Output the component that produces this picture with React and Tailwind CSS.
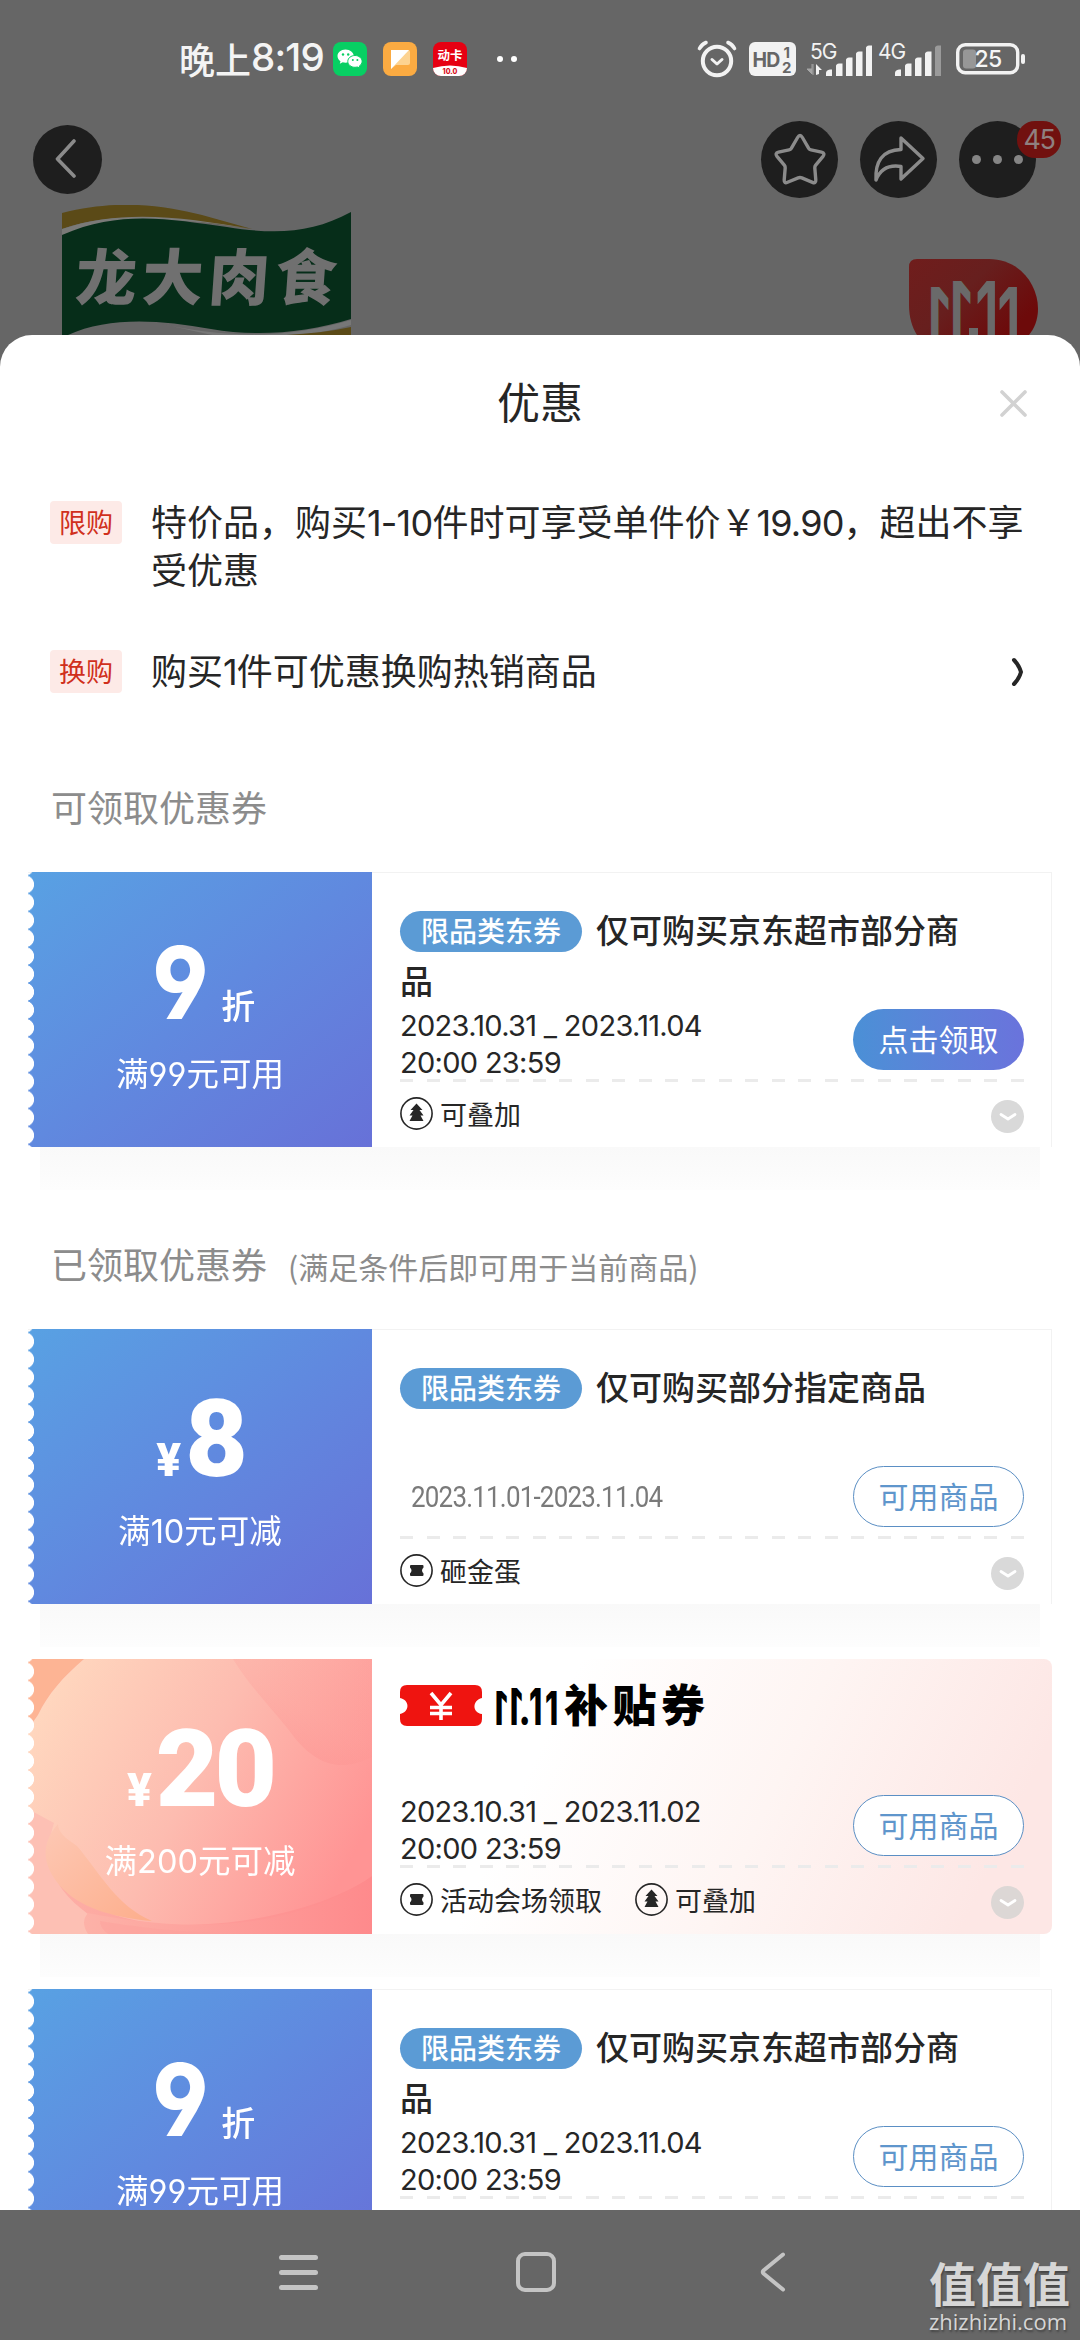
import clsx from 'clsx';

const BackIcon = () => (
  <svg width="22" height="40" viewBox="0 0 22 40" fill="none" stroke="#8b8b8b" strokeWidth="3.6" strokeLinecap="round" strokeLinejoin="round">
    <path d="M19 2 2.5 20 19 37" />
  </svg>
);

const AppIcons = () => (
  <div className="flex items-center gap-4">
    <svg width="34" height="34" viewBox="0 0 34 34">
      <rect width="34" height="34" rx="8" fill="#07cf63" />
      <path d="M12.5 7.5c-4.6 0-8 3-8 6.6 0 2.1 1.2 4 3 5.2l-.7 2.5 2.9-1.5c.9.2 1.8.4 2.8.4 4.6 0 8.2-3 8.2-6.6s-3.6-6.6-8.2-6.6z" fill="#fff" />
      <path d="M22 13.5c-4 0-7.2 2.6-7.2 5.9s3.2 5.9 7.2 5.9c.9 0 1.7-.1 2.5-.3l2.4 1.3-.6-2.2c1.7-1.1 2.8-2.8 2.8-4.7 0-3.3-3.2-5.9-7.1-5.9z" fill="#fff" stroke="#07cf63" strokeWidth="1" />
      <g fill="#07cf63">
        <circle cx="10" cy="12.5" r="1.2" />
        <circle cx="15.2" cy="12.5" r="1.2" />
        <circle cx="19.8" cy="18" r="1" />
        <circle cx="24.4" cy="18" r="1" />
      </g>
    </svg>
    <svg width="34" height="34" viewBox="0 0 34 34">
      <rect width="34" height="34" rx="8" fill="#fbab42" />
      <path d="M8 8h17a2 2 0 0 1 2 2v11a2 2 0 0 1-2 2H13l-5 4z" fill="#fdd391" />
      <path d="M8 8h18L8 27z" fill="#fff" />
    </svg>
    <svg width="34" height="34" viewBox="0 0 34 34">
      <defs>
        <clipPath id="card-app">
          <rect width="34" height="34" rx="8" />
        </clipPath>
      </defs>
      <g clipPath="url(#card-app)">
        <rect width="34" height="34" fill="#e60012" />
        <path d="M0 26q17-5 34 0v8H0z" fill="#fff" />
      </g>
      <text x="17" y="18" textAnchor="middle" fontSize="12.5" fontWeight="700" fill="#fff" fontFamily="'Noto Sans CJK SC', sans-serif">动卡</text>
      <text x="17" y="31.5" textAnchor="middle" fontSize="7" fontWeight="800" fill="#d8101c" fontFamily="Inter, sans-serif">10.0</text>
    </svg>
  </div>
);

const Signal = ({ label, weak, data }) => (
  <svg width="66" height="36" viewBox="0 0 66 36">
    <text x={data ? 4 : 3} y="17.5" fontSize="21" letterSpacing="-1" fill="#f2f2f2" fontFamily="Inter, sans-serif">{label}</text>
    {data && (
      <g>
        <path d="M6 23v10l-5-5h5M7 23v11" fill="#a5a5a5" stroke="#a5a5a5" strokeWidth="1" />
        <path d="M10 34V23l6 6h-3v4" fill="#f2f2f2" />
      </g>
    )}
    <g fill="#f2f2f2">
      <path d="M20 35v-3q0-3 4-3.5h2v6.5z" />
      <path d="M30 35V25q0-2 3-2.5h3.5V35z" />
      <path d="M40 35V19q0-2 3-2.5h3.5V35z" />
      <path d="M50 35V13q0-2 3-2.5h3.5V35z" />
      <path d="M60 35V7q0-2 3-2.5h3.5V35z" fill={weak ? '#9a9a9a' : '#f2f2f2'} />
    </g>
  </svg>
);

const StatusBar = () => (
  <div className="flex h-[118px] items-center pl-[179px]">
    <span className="flex w-[154px] items-center whitespace-nowrap pb-[3px] text-[36px] font-medium leading-none text-[#f4f4f4]">
      晚上<span className="font-['Inter'] text-[38.5px] leading-none tracking-[-0.8px]">8:19</span>
    </span>
    <AppIcons />
    <div className="ml-[30px] flex w-[200px] gap-2">
      <i className="size-[6px] rounded-full bg-white" />
      <i className="size-[6px] rounded-full bg-white" />
    </div>
    <svg className="shrink-0" width="40" height="38" viewBox="0 0 40 38" fill="none" stroke="#f2f2f2" strokeLinecap="round" strokeLinejoin="round">
      <circle cx="20" cy="21" r="14.2" strokeWidth="4" />
      <path d="M15 19.5l5 4.5 5-4.5" strokeWidth="3" />
      <path d="M2.5 8.5q2-4 6.5-6M37.5 8.5q-2-4-6.5-6" strokeWidth="3.6" />
    </svg>
    <svg className="ml-[12px] shrink-0" width="47" height="34" viewBox="0 0 47 34" fill="#666" fontFamily="Inter, sans-serif">
      <rect width="47" height="34" rx="6" fill="#f2f2f2" />
      <text x="3.5" y="24.5" fontSize="19.5" fontWeight="700" letterSpacing="-0.8">HD</text>
      <text x="34.5" y="15.5" fontSize="15" fontWeight="700">1</text>
      <text x="33" y="31" fontSize="15" fontWeight="700">2</text>
    </svg>
    <div className="ml-[10px] flex shrink-0 gap-[3px]">
      <Signal label="5G" data />
      <Signal label="4G" weak />
    </div>
    <svg className="ml-[15px] shrink-0" width="70" height="32" viewBox="0 0 70 32">
      <rect x="1.7" y="1.7" width="60" height="28" rx="7.5" fill="none" stroke="#f2f2f2" strokeWidth="3.4" />
      <rect x="7" y="6.5" width="13" height="19" rx="3" fill="#979797" />
      <rect x="65" y="11" width="4" height="10" rx="2" fill="#f2f2f2" />
      <text x="32" y="24" textAnchor="middle" fontSize="23" fontWeight="500" letterSpacing="-0.8" fill="#f6f6f6" fontFamily="Inter, sans-serif">25</text>
    </svg>
  </div>
);

const Toolbar = () => (
  <div className="flex h-[82px] items-center pl-[33px] pr-[44px]">
    <button className="flex size-[69px] items-center justify-center rounded-full bg-[#1e1e1e] pr-1">
      <BackIcon />
    </button>
    <div className="ml-auto flex gap-[22px]">
      <button className="flex size-[77px] items-center justify-center rounded-full bg-[#1e1e1e]">
        <svg width="54" height="54" viewBox="0 0 54 54" fill="none" stroke="#8b8b8b" strokeWidth="3.4" strokeLinejoin="round">
          <path d="M24.6 5.5q2.4-4 4.8 0l6.3 10.8q.8 1.3 2.3 1.6l10.5 2.3q4 1 1.5 4.2l-7.3 8.7q-1 1.2-.9 2.8l1 12q.2 3.8-3.3 2.4l-10.700-4.400q-1.800-.7-3.600 0l-10.700 4.400q-3.500 1.400-3.300-2.400l1-12q.1-1.600-.9-2.800L4 24.400q-2.500-3.200 1.500-4.200L16 17.900q1.500-.3 2.300-1.600z" />
        </svg>
      </button>
      <button className="flex size-[77px] items-center justify-center rounded-full bg-[#1e1e1e]">
        <svg width="54" height="48" viewBox="0 0 54 48" fill="none" stroke="#8b8b8b" strokeWidth="3.4" strokeLinejoin="round">
          <path d="M29 3 51 23.500 29 44V31.500C16 29.500 8 35 4 45 3 27 10 15 29 14.500z" />
        </svg>
      </button>
      <button className="relative flex size-[77px] items-center justify-center gap-[12px] rounded-full bg-[#1e1e1e]">
        <i className="size-[9px] rounded-full bg-[#858585]" />
        <i className="size-[9px] rounded-full bg-[#858585]" />
        <i className="size-[9px] rounded-full bg-[#858585]" />
        <span className="absolute -right-[25px] top-0 flex h-[37px] w-[44px] items-center justify-center rounded-[18px] bg-[#71110f] font-['Inter'] text-[27px] leading-none tracking-[-1.5px] text-[#8f8080]">45</span>
      </button>
    </div>
  </div>
);

// Store logo and sale badge behind the sheet
const StoreBanner = () => (
  <div className="flex h-[135px] items-end justify-between pl-[62px] pr-[42px]">
    <svg width="289" height="130" viewBox="0 0 289 130">
      <path d="M0 8C55-6 100 0 140 10l50 14C130 16 60 3 0 24z" fill="#5b4a17" />
      <path d="M0 24C60 4 120 12 190 24 130 15 70 7 0 30z" fill="#7a7a78" />
      <path d="M0 30C60 4 110 15 165 22c50 8 85 6 124-15v107c-45 14-95 18-140 10C95 114 45 112 6 130H0z" fill="#062d19" />
      <path d="M100 119c55 12 120 17 189-4v5c-45 13-80 12-110 10H150z" fill="#777" />
      <path d="M165 130c45 2 85 0 124-8v8z" fill="#5b4a17" />
      <text x="14" y="95" fontSize="61" fontWeight="900" letterSpacing="5.5" fill="#707070" fontFamily="'Noto Sans CJK SC', sans-serif" transform="skewX(-4) translate(5 0)">龙大肉食</text>
    </svg>
    <svg width="129" height="76" viewBox="0 0 129 76">
      <defs>
        <linearGradient id="sale" x1="0" y1="0" x2="1" y2="0.6">
          <stop offset="0" stopColor="#701d1c" />
          <stop offset="0.5" stopColor="#671f1e" />
          <stop offset="1" stopColor="#6d0a0a" />
        </linearGradient>
      </defs>
      <path d="M0 8Q0 0 8 0h72c30 0 49 25 49 50 0 11-4 20-9 26H8C3 68 0 58 0 46z" fill="url(#sale)" />
      <g fontFamily="Inter, sans-serif" fontSize="98" fontWeight="600" fill="#6a6a6a">
        <text transform="translate(42 99) scale(-0.58 1)">1</text>
        <text transform="translate(64 93) scale(-0.58 1)">1</text>
        <text transform="translate(66 93) scale(0.58 1)">1</text>
        <text transform="translate(88 99) scale(0.58 1)">1</text>
      </g>
      <rect x="60" y="69" width="9" height="8" fill="#6a6a6a" />
    </svg>
  </div>
);

const promos = [
  {
    tag: '限购',
    text: (
      <>
        特价品，购买<span className="font-['Inter'] leading-none tracking-[-0.8px]">1-10</span>件时可享受单件价￥<span className="font-['Inter'] leading-none tracking-[-0.8px]">19.90</span>，超出不享受优惠
      </>
    ),
  },
  {
    tag: '换购',
    text: (
      <>
        购买<span className="font-['Inter'] leading-none tracking-[-1px]">1</span>件可优惠换购热销商品
      </>
    ),
    more: true,
  },
];

const PromoRow = ({ tag, text, more }) => (
  <div className="flex h-[96px] items-start">
    <span className="mt-[5px] flex h-[43px] w-[72px] shrink-0 items-center justify-center rounded bg-[#fdeae7] pb-[2px] text-[27px] leading-none text-[#d0301c]">{tag}</span>
    <p className="ml-[29px] w-[878px] text-[36px] leading-[48px] text-[#262626]">{text}</p>
    {more && (
      <svg className="ml-[-18px] mt-[12px] shrink-0" width="14" height="30" viewBox="0 0 14 30" fill="none" stroke="#262626" strokeWidth="4" strokeLinecap="round">
        <path d="M3 3q5 5 7 12-2 7-7 12" />
      </svg>
    )}
  </div>
);

const StackIcon = () => (
  <svg width="33" height="33" viewBox="0 0 33 33">
    <circle cx="16.5" cy="16.5" r="15.6" fill="none" stroke="#262626" strokeWidth="1.6" />
    <path d="M16.500 6.500l6 6.500h-3l4 5.500h-3l3 5.500h-14l3-5.500h-3l4-5.500h-3z" fill="#262626" />
  </svg>
);

const VoucherIcon = () => (
  <svg width="33" height="33" viewBox="0 0 33 33">
    <circle cx="16.5" cy="16.5" r="15.6" fill="none" stroke="#262626" strokeWidth="1.6" />
    <path d="M11 11h11.500q1 0 1 1v1.500q-3 3 0 6V21q0 1-1 1H11q-1 0-1-1v-1.500q3-3 0-6V12q0-1 1-1z" fill="#262626" />
  </svg>
);

const labels = {
  stack: { Icon: StackIcon, text: '可叠加' },
  egg: { Icon: VoucherIcon, text: '砸金蛋' },
  venue: { Icon: VoucherIcon, text: '活动会场领取' },
};

const PetalArt = () => (
  <svg className="absolute inset-0" width="344" height="275" viewBox="0 0 344 275" preserveAspectRatio="none">
    <defs>
      <linearGradient id="petal-mid" x1="0" y1="0.2" x2="1" y2="0.6">
        <stop offset="0" stopColor="#ffd8bf" />
        <stop offset="0.5" stopColor="#fdbcb0" />
        <stop offset="1" stopColor="#ff9494" />
      </linearGradient>
      <linearGradient id="petal-leaf" x1="0" y1="0" x2="1" y2="1">
        <stop offset="0" stopColor="#fdc8b4" />
        <stop offset="1" stopColor="#fdae8c" />
      </linearGradient>
      <linearGradient id="petal-low" x1="0" y1="0" x2="1" y2="0">
        <stop offset="0" stopColor="#fdb2a8" />
        <stop offset="1" stopColor="#fe8a8c" />
      </linearGradient>
      <linearGradient id="petal-shade" x1="0" y1="1" x2="0.7" y2="0">
        <stop offset="0" stopColor="#fb8888" stopOpacity="0.5" />
        <stop offset="0.6" stopColor="#fd9a96" stopOpacity="0.25" />
        <stop offset="1" stopColor="#fd9a96" stopOpacity="0.15" />
      </linearGradient>
    </defs>
    <rect width="344" height="275" fill="url(#petal-low)" />
    <path d="M0 0h56C35 18 20 35 10 56L0 70z" fill="#fdb494" />
    <path d="M56 0C35 18 20 35 10 56L0 70v90c20 70 70 104 150 106 80 0 150-20 194-48V0z" fill="url(#petal-mid)" />
    <path d="M205 0c15 25 35 45 55 70 25 35 50 45 84 28V0z" fill="url(#petal-shade)" />
    <path d="M0 150l26 14c-8 24-4 48 8 66 15 20 35 32 60 45H0z" fill="#fdc0b4" />
    <path d="M30 165c-20 22-14 46 6 66 20 20 55 28 88 31-35-15-50-45-75-75-12-8-19-14-19-22z" fill="url(#petal-leaf)" />
    <path d="M60 254c70 14 190 28 284-37v58H60q-8-12 0-21z" fill="url(#petal-low)" />
    <path d="M72 262c60 10 100 12 150 13H80q-8-6-8-13z" fill="#fda09c" opacity="0.45" />
  </svg>
);

const Amount = ({ amount, unit }) => (
  <div className="flex h-[80px] items-baseline justify-center leading-[80px] text-white">
    {unit === '¥' && <span className="mr-[4px] font-['Roboto'] text-[46px] font-black">¥</span>}
    <span className={clsx(unit === '折' ? "origin-right scale-x-[0.88] font-['Inter'] text-[101px] font-extrabold [font-feature-settings:'ss01']" : "font-['Roboto'] text-[108px] font-black tracking-[-4px]")}>{amount}</span>
    {unit === '折' && <span className="ml-[13px] text-[34px] font-medium leading-none">折</span>}
  </div>
);

const CategoryPill = () => (
  <span className="float-left mr-[14px] mt-[7px] flex h-[41px] w-[182px] items-center justify-center rounded-full bg-[#5b9bd5] pb-[3px] text-[28px] font-medium leading-none text-white">限品类东券</span>
);

const SubsidyTitle = () => (
  <svg width="310" height="46" viewBox="0 0 310 46">
    <path d="M7 2h68q7 0 7 7v6c-10 2-10 15 0 16v5q0 7-7 7H7q-7 0-7-7v-5c10-2 10-14 0-16V9q0-7 7-7z" fill="#ef1410" />
    <path d="M31 10l10 12 10-12M41 22v15M30 24.5h22M30 30.5h22" fill="none" stroke="#fff" strokeWidth="3.6" />
    <g fontFamily="Inter, sans-serif" fontSize="50" fontWeight="800">
      <text transform="translate(108 41.5) scale(-0.6 0.94)">1</text>
      <text transform="translate(123 41.5) scale(-0.6 1.02)">1</text>
      <text transform="translate(118.5 41.5) scale(0.7 0.9)">.</text>
      <text transform="translate(129 41.5) scale(0.6 1.02)">1</text>
      <text transform="translate(145 41.5) scale(0.6 0.94)">1</text>
    </g>
    <text x="164" y="38.5" fontSize="44" fontWeight="900" letterSpacing="4.5" fontFamily="'Noto Sans CJK SC', sans-serif">补贴券</text>
  </svg>
);

const Coupon = ({ amount, unit, condition, title, period, range, tags, claim, subsidy }) => (
  <article>
    <div className={clsx('flex h-[275px]', !subsidy && 'border-r border-t border-[#f2f2f2]', subsidy && 'rounded-r-[8px] bg-[linear-gradient(115deg,#fff_48%,#fef5f3_70%,#fde7e5_92%)]')}>
      <div
        className={clsx(
          'relative w-[344px] shrink-0 overflow-hidden [mask-image:radial-gradient(circle_at_-3px_50%,transparent_8.7px,#000_9.4px)] [mask-position:0_3.5px] [mask-size:100%_17.93px]',
          !subsidy && '-mt-px h-[275px] bg-linear-to-br from-[#58a1e3] via-[#6089df] to-[#6771d8]'
        )}
      >
        {subsidy && <PetalArt />}
        <div className="relative flex flex-col pt-[70px]">
          <Amount amount={amount} unit={unit} />
          <p className="mt-[30px] text-center text-[32.5px] leading-[40px] text-white">
            满<span className="font-['Inter'] leading-none [font-feature-settings:'ss01']">{condition[0]}</span>
            {condition[1]}
          </p>
        </div>
      </div>

      <div className={clsx('flex flex-1 flex-col pl-[28px]', subsidy ? 'pr-[28px]' : 'pr-[27px]')}>
        <div className="h-[133px]">
          {subsidy ? (
            <div className="pt-[24px]">
              <SubsidyTitle />
            </div>
          ) : (
            <h3 className="w-[580px] pt-[31px] text-[33px] font-medium leading-[51px] text-[#262626]">
              <CategoryPill />
              {title}
            </h3>
          )}
        </div>

        <div className="flex h-[73px] items-start justify-between">
          {range ? (
            <p className="ml-[11px] mt-[16px] origin-left scale-x-[0.88] font-['Roboto'] text-[29.5px] leading-[37px] tracking-[-0.9px] text-[#7a7a7a]">{range}</p>
          ) : (
            <div className="pt-px font-['Inter'] text-[29px] leading-[37px] tracking-[-0.7px] text-[#262626]">
              <p>{period}</p>
              <p>20:00 23:59</p>
            </div>
          )}
          <button
            className={clsx(
              'mt-[3px] flex h-[61px] w-[171px] shrink-0 items-center justify-center rounded-full pb-[4px] text-[30px] leading-none',
              claim ? 'bg-linear-to-r from-[#4a90d6] to-[#6a73dc] text-white' : 'border border-[#5b8fc4] bg-white text-[#5f96cc]'
            )}
          >
            {claim ? '点击领取' : '可用商品'}
          </button>
        </div>

        <div className="h-[3px] shrink-0 bg-[repeating-linear-gradient(90deg,#ebebeb_0_13px,transparent_13px_26.55px)]" />

        <div className="mt-[12px] flex items-center">
          {tags.map((key) => {
            const { Icon, text } = labels[key];
            return (
              <span key={key} className="mr-[33px] flex items-center gap-[7px] text-[27px] leading-[36px] text-[#262626]">
                <Icon />
                {text}
              </span>
            );
          })}
          <span className={clsx('ml-auto mt-[6px] flex size-[33px] items-center justify-center rounded-full', subsidy ? 'bg-[#dcd7d5]' : 'bg-[#d9d9d9]')}>
            <svg width="18" height="8" viewBox="0 0 18 8" fill="none" stroke="#fff" strokeWidth="2.8" strokeLinecap="round" strokeLinejoin="round">
              <path d="M2 1.5l7 4.5 7-4.5" />
            </svg>
          </span>
        </div>
      </div>
    </div>
    <div className="mx-[12px] h-[43px] bg-linear-to-b from-[#f9f9f9] to-[#fdfdfd]" />
  </article>
);

const received = [
  { amount: '8', unit: '¥', condition: ['10', '元可减'], title: '仅可购买部分指定商品', range: '2023.11.01-2023.11.04', tags: ['egg'] },
  { amount: '20', unit: '¥', condition: ['200', '元可减'], period: '2023.10.31 _ 2023.11.02', tags: ['venue', 'stack'], subsidy: true },
  { amount: '9', unit: '折', condition: ['99', '元可用'], title: '仅可购买京东超市部分商品', period: '2023.10.31 _ 2023.11.04', tags: ['stack'] },
];

const CouponSheet = () => (
  <section className="h-[1875px] shrink-0 overflow-hidden rounded-t-[32px] bg-white">
    <header className="flex h-[137px] items-center justify-between pl-[80px] pr-[53px]">
      <h2 className="flex-1 pb-[6px] text-center text-[43px] leading-none text-[#262626]">优惠</h2>
      <svg width="27" height="27" viewBox="0 0 27 27" fill="none" stroke="#d2d2d2" strokeWidth="3.6" strokeLinecap="round">
        <path d="M2 2l23 23M25 2 2 25" />
      </svg>
    </header>

    <div className="mt-[24px] flex flex-col gap-[53px] pl-[50px]">
      {promos.map((promo) => (
        <PromoRow key={promo.tag} {...promo} />
      ))}
    </div>

    <h3 className="mt-[41px] h-[48px] pl-[51px] text-[36px] leading-[48px] text-[#8c8c8c]">可领取优惠券</h3>
    <div className="mt-[42px] pl-[28px] pr-[28px]">
      <Coupon amount="9" unit="折" condition={['99', '元可用']} title="仅可购买京东超市部分商品" period="2023.10.31 _ 2023.11.04" tags={['stack']} claim />
    </div>

    <h3 className="mt-[49px] flex h-[48px] items-baseline pl-[51px] text-[36px] leading-[48px] text-[#8c8c8c]">
      已领取优惠券<span className="ml-[21px] text-[30px]">(满足条件后即可用于当前商品)</span>
    </h3>
    <div className="mt-[42px] flex flex-col gap-[12px] pl-[28px] pr-[28px]">
      {received.map((coupon, i) => (
        <Coupon key={i} {...coupon} />
      ))}
    </div>
  </section>
);

const NavBar = () => (
  <nav className="relative flex h-[130px] shrink-0 items-center bg-[#666] pb-[6px] pl-[279px]">
    <div className="flex w-[39px] flex-col gap-[10px]">
      <i className="h-[5px] rounded-sm bg-[#c4c4c4]" />
      <i className="h-[5px] rounded-sm bg-[#c4c4c4]" />
      <i className="h-[5px] rounded-sm bg-[#c4c4c4]" />
    </div>
    <i className="ml-[198px] size-[40px] rounded-[9px] border-4 border-[#c4c4c4]" />
    <svg className="ml-[204px]" width="26" height="40" viewBox="0 0 26 40" fill="none" stroke="#c4c4c4" strokeWidth="4" strokeLinecap="round" strokeLinejoin="round">
      <path d="M23 2.5 3.5 18.5q-1.5 1.5 0 3L23 37.5" />
    </svg>
    <div className="absolute left-[929px] top-[46px] text-[#d6d6d6] [text-shadow:1px_2px_2px_#444]">
      <p className="text-[47px] font-bold leading-[52px]">值值值</p>
      <p className="font-['Open_Sans'] text-[22px] leading-[26px]">zhizhizhi.com</p>
    </div>
  </nav>
);

export default function App() {
  return (
    <main className="flex h-[2340px] w-[1080px] flex-col overflow-hidden bg-[#666] font-['Noto_Sans_CJK_SC',sans-serif]">
      <StatusBar />
      <Toolbar />
      <StoreBanner />
      <CouponSheet />
      <NavBar />
    </main>
  );
}
